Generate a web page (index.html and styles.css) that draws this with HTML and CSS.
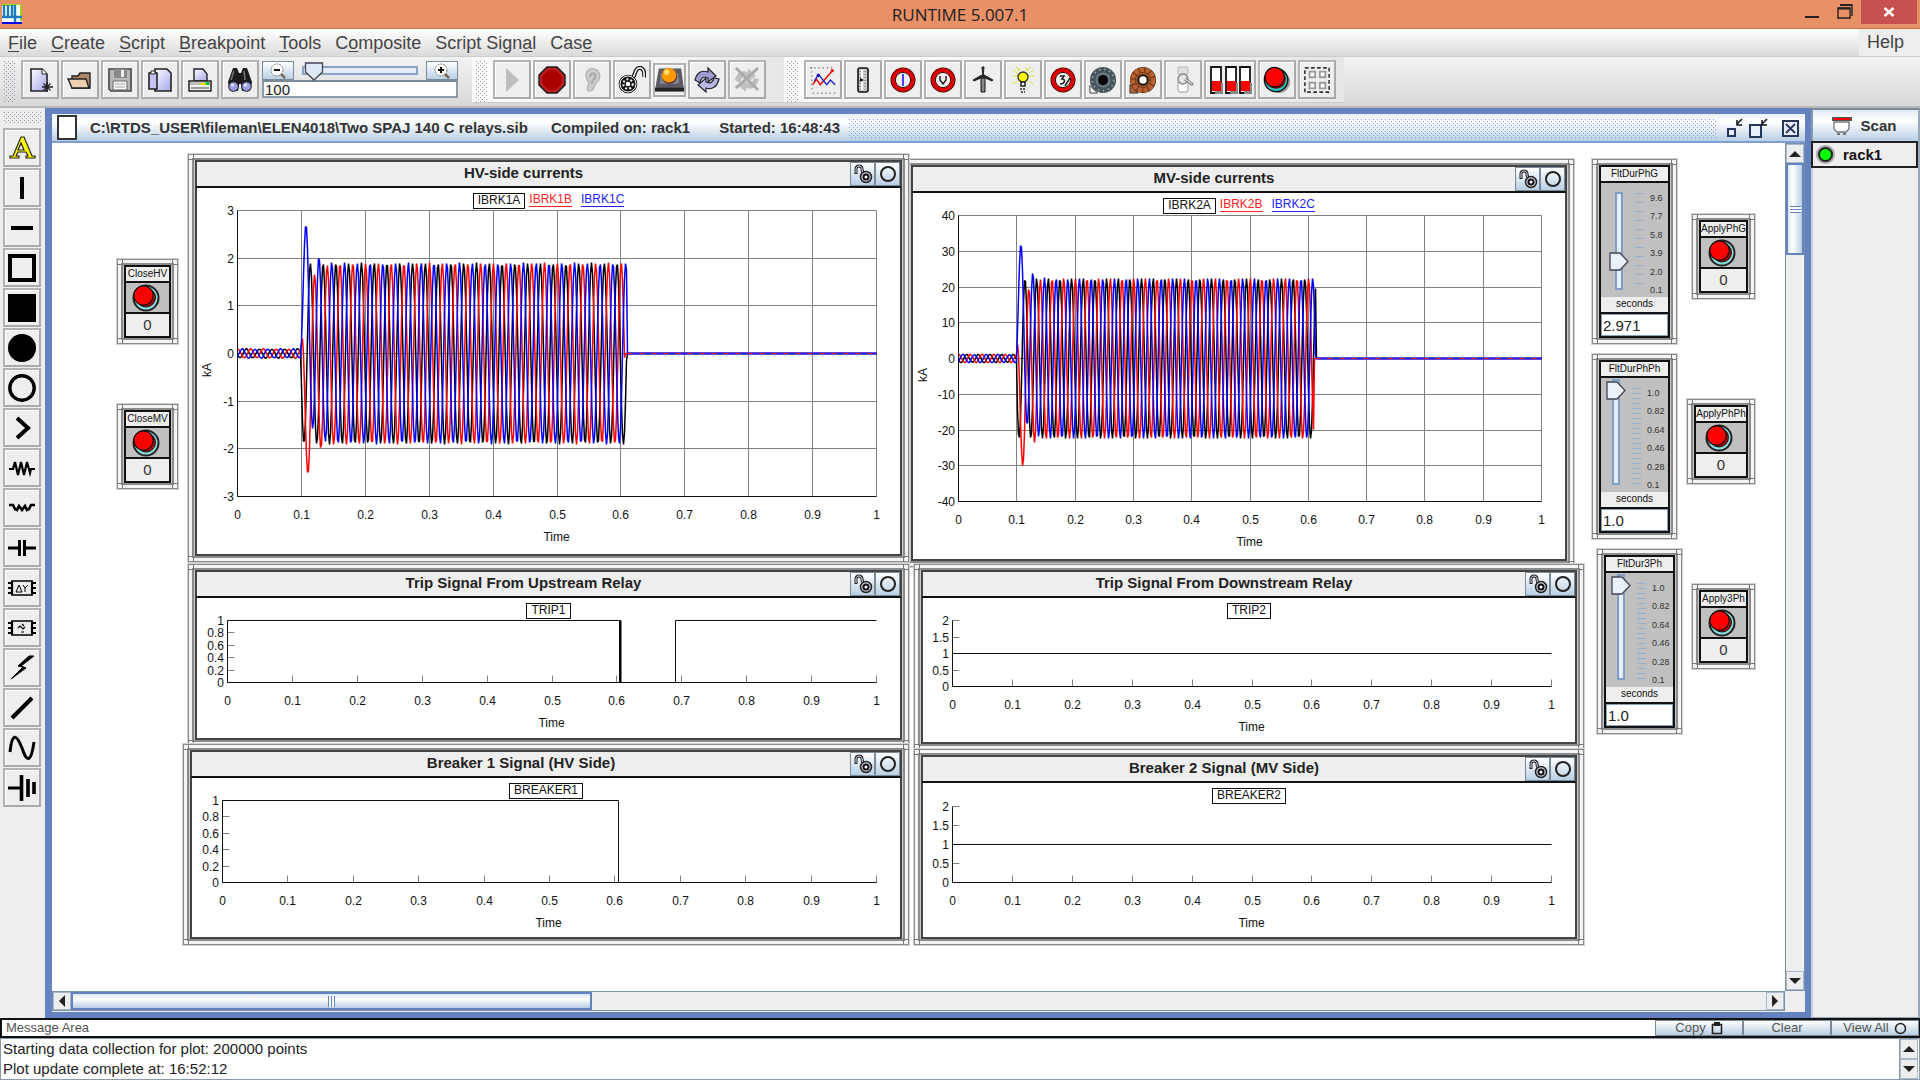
FILE: index.html
```html
<!DOCTYPE html>
<html lang="en">
<head>
<meta charset="utf-8">
<title>RUNTIME 5.007.1</title>
<link rel="stylesheet" href="styles.css">
</head>
<body>
<header class="titlebar">
  <svg class="app-icon" width="20" height="20" viewBox="0 0 20 20"><rect width="20" height="20" fill="#fff"/><path d="M0 0h14v2H0zM18 0h2v17h-2zM14 0h4v1h-4z" fill="#9fd020"/><path d="M2 1v11M6 1v11M10 1v11M13 1v17M0 13h20" stroke="#1c7cc0" stroke-width="2.4" fill="none"/><path d="M0 18h20v2H0z" fill="#00e"/></svg>
  <h1>RUNTIME 5.007.1</h1>
  <div class="win-controls">
    <button class="wc" aria-label="Minimize"><svg width="16" height="20" viewBox="0 0 16 20"><path d="M1 17h14" stroke="#222" stroke-width="2"/></svg></button>
    <button class="wc" aria-label="Restore"><svg width="16" height="20" viewBox="0 0 16 20"><path d="M3 5h12v11M1 8h12v10H1z" stroke="#222" stroke-width="1.4" fill="none"/><path d="M3 5h12M1 8.500h12" stroke="#222" stroke-width="2"/></svg></button>
    <button class="wc close" aria-label="Close"><svg width="12" height="10" viewBox="0 0 12 10"><path d="M1.500 1l9 8M10.500 1l-9 8" stroke="#fff" stroke-width="2.400"/></svg></button>
  </div>
</header>

<nav class="menubar">
  <a href="#"><u>F</u>ile</a><a href="#"><u>C</u>reate</a><a href="#"><u>S</u>cript</a><a href="#"><u>B</u>reakpoint</a><a href="#"><u>T</u>ools</a><a href="#">C<u>o</u>mposite</a><a href="#">Script Sign<u>a</u>l</a><a href="#">Cas<u>e</u></a>
  <a href="#" class="help">Help</a>
</nav>

<div class="toolbars">
  <div class="toolbar first">
    <i class="grip"></i>
    <button class="tb" aria-label="New"><svg viewBox="0 0 28 28"><defs><linearGradient id="lav" x2="1" y2="1"><stop stop-color="#fff"/><stop offset=".6" stop-color="#c8c8f4"/><stop offset="1" stop-color="#a8a8e0"/></linearGradient></defs><path d="M5 3h11l5 5v17H5z" fill="url(#lav)" stroke="#222" stroke-width="1.600"/><path d="M16 3v5h5" fill="#fff" stroke="#222"/><path d="M21 16v10M16 21h11M17.500 17.500l7 7M24.500 17.500l-7 7" stroke="#222" stroke-width="1.300"/></svg></button>
    <button class="tb" aria-label="Open"><svg viewBox="0 0 28 28"><path d="M6 22V10h6l2-3h10v15z" fill="#b08868" stroke="#222" stroke-width="1.400"/><path d="M2 13h18l3 9H6z" fill="#ecd0b0" stroke="#222" stroke-width="1.400"/></svg></button>
    <button class="tb" aria-label="Save"><svg viewBox="0 0 28 28"><path d="M3 3h22v22H5l-2-2z" fill="#b8b8b8" stroke="#444" stroke-width="1.600"/><path d="M8 3h13v9H8z" fill="#888"/><path d="M15 4h3v7h-3z" fill="#eee"/><path d="M7 15h14v9H7z" fill="#f4f4f4" stroke="#666"/><path d="M9 18h10M9 21h10" stroke="#aaa"/></svg></button>
    <button class="tb" aria-label="Paste"><svg viewBox="0 0 28 28"><path d="M9 3h12l4 4v18H9z" fill="url(#lav)" stroke="#222" stroke-width="1.600"/><path d="M3 7h8v16H3z" fill="#c4c4ee" stroke="#222" stroke-width="1.600"/><path d="M5 5h4v3H5z" fill="#fff" stroke="#222"/></svg></button>
    <button class="tb" aria-label="Print"><svg viewBox="0 0 28 28"><path d="M8 15V3h9l4 5v7z" fill="url(#lav)" stroke="#222" stroke-width="1.400"/><path d="M3 15h22v10H3z" fill="#eee" stroke="#222" stroke-width="1.500"/><path d="M4 16h20v3H4z" fill="#bcbcbc"/><path d="M14 17h9v2h-9z" fill="#dd0"/><path d="M20 16h3v3h-3z" fill="#0b3"/><path d="M5 22h18" stroke="#999" stroke-width="2"/></svg></button>
    <button class="tb" aria-label="Find"><svg viewBox="0 0 28 28"><path d="M7 2h4l2 5h2l2-5h4l5 14-2 9h-8l-1-7h-2l-1 7H4l-2-9z" fill="#1c1c1c"/><path d="M8 5L5 14M18 5l1 9" stroke="#777" stroke-width="1.500"/><circle cx="7.500" cy="20.500" r="4.800" fill="#9c9ce8" stroke="#111"/><circle cx="20.500" cy="20.500" r="4.800" fill="#9c9ce8" stroke="#111"/><circle cx="6.500" cy="19" r="1.600" fill="#e8e8ff"/><circle cx="19.500" cy="19" r="1.600" fill="#e8e8ff"/></svg></button>
    <div class="zoom">
      <div class="zoom-row">
        <button class="zb" aria-label="Zoom out"><svg width="20" height="16" viewBox="0 0 20 16"><circle cx="9" cy="7" r="6" fill="#fff" stroke="#777" stroke-dasharray="2 1"/><path d="M6 7h6" stroke="#111" stroke-width="2"/><path d="M13 11l4 4" stroke="#765" stroke-width="2.500"/></svg></button>
        <input class="hslider" type="range" min="0" max="100" value="0" aria-label="Zoom">
        <button class="zb" aria-label="Zoom in"><svg width="20" height="16" viewBox="0 0 20 16"><circle cx="9" cy="7" r="6" fill="#fff" stroke="#777" stroke-dasharray="2 1"/><path d="M6 7h6M9 4v6" stroke="#111" stroke-width="2"/><path d="M13 11l4 4" stroke="#765" stroke-width="2.500"/></svg></button>
      </div>
      <input class="zoom-value" type="text" value="100" aria-label="Zoom percent">
    </div>
  </div>

  <div class="toolbar second">
    <i class="grip"></i>
    <button class="tb" aria-label="Run"><svg viewBox="0 0 28 28"><path d="M8 2l13 12L8 26z" fill="#bdbdbd"/></svg></button>
    <button class="tb" aria-label="Stop"><svg viewBox="0 0 28 28"><path d="M9 1h10l8 8v10l-8 8H9l-8-8V9z" fill="#a00" stroke="#222" stroke-width="1.500"/><path d="M10 3h8l7 7v8l-7 7h-8l-7-7v-8z" fill="none" stroke="#c44"/></svg></button>
    <button class="tb" aria-label="Listen"><svg viewBox="0 0 28 28"><path d="M9 13c-3-7 2-11 7-10 7 1 7 10 3 13-3 2-2 9-7 9-4 0-3-4-1-7z" fill="#ccc" stroke="#b8b8b8" stroke-width="1.500"/><path d="M12 11c0-5 7-5 5 1-1 2-4 2-3 6" fill="none" stroke="#a8a8a8" stroke-width="2"/></svg></button>
    <button class="tb" aria-label="Unlock"><svg viewBox="0 0 28 28"><path d="M14 12c4-2 2-9 7-10 4-1 6 4 5 9" fill="none" stroke="#111" stroke-width="4"/><path d="M14 12c4-2 2-9 7-10 4-1 6 4 5 9" fill="none" stroke="#fff" stroke-width="1.600"/><circle cx="10" cy="18" r="9.300" fill="#111"/><circle cx="10" cy="18" r="8" fill="none" stroke="#fff"/><circle cx="10" cy="18" r="4.700" fill="none" stroke="#fff" stroke-width="2" stroke-dasharray="2 2"/><circle cx="10" cy="18" r="2.300" fill="#fff"/></svg></button>
    <button class="tb small" aria-label="Alarm"><svg viewBox="0 0 30 26"><path d="M4 1h23l3 22H0z" fill="#5a5a62"/><path d="M6 6h18l1 11H5z" fill="#85858d"/><path d="M0 21h30v4H0z" fill="#222"/><circle cx="15" cy="9" r="8" fill="#633"/><circle cx="14.500" cy="8" r="7.500" fill="#f90"/><circle cx="12" cy="5" r="2.800" fill="#fd6"/></svg></button>
    <button class="tb" aria-label="Refresh"><svg viewBox="0 0 28 28"><path d="M2 14C4 6 9 4 15 6V2l8 8-8 6v-4c-5-2-7 0-8 5z" fill="#9c9cd0" stroke="#223" stroke-width="1.200"/><path d="M26 13c-2 8-7 11-13 9v4l-8-7 8-7v4c5 2 7 0 8-4z" fill="#b8b8e0" stroke="#223" stroke-width="1.200"/></svg></button>
    <button class="tb" aria-label="Refresh off"><svg viewBox="0 0 28 28"><path d="M2 14C4 6 9 4 15 6V2l8 8-8 6v-4c-5-2-7 0-8 5zM26 13c-2 8-7 11-13 9v4l-8-7 8-7v4c5 2 7 0 8-4z" fill="#c0c0c0"/><path d="M3 2l22 22M25 2L3 22" stroke="#aaa" stroke-width="3"/></svg></button>
  </div>

  <div class="toolbar third">
    <i class="grip"></i>
    <button class="tb" aria-label="Plot"><svg viewBox="0 0 30 30"><path d="M3 1v26M1 2h27M4 29h24" stroke="#777" stroke-width="1.300" stroke-dasharray="1.500 3"/><path d="M4 20l4-6 4 6L25 5" fill="none" stroke="#e11" stroke-width="1.700"/><path d="M6 16l4-7 9 11 4-5 5 5" fill="none" stroke="#22c" stroke-width="1.500"/><circle cx="10" cy="10" r="1.800" fill="#00a"/><circle cx="25" cy="5" r="1.800" fill="#e11"/></svg></button>
    <button class="tb" aria-label="Slider"><svg viewBox="0 0 28 28"><rect x="9" y="2" width="10" height="24" rx="2" fill="#ccc" stroke="#111" stroke-width="1.600"/><path d="M11 5v19M16 5v19" stroke="#666" stroke-dasharray="1 2"/><path d="M13 4v20" stroke="#fff" stroke-width="2"/><path d="M11 12l4 2-4 2z" fill="#111"/></svg></button>
    <button class="tb" aria-label="Meter"><svg viewBox="0 0 28 28"><circle cx="14" cy="14" r="12.500" fill="#300"/><circle cx="14" cy="14" r="9.700" fill="#f1eeee" stroke="#d00" stroke-width="4"/><circle cx="14" cy="14" r="7.600" fill="none" stroke="#311"/><path d="M14 8v12" stroke="#44f" stroke-width="2"/></svg></button>
    <button class="tb" aria-label="Voltmeter"><svg viewBox="0 0 28 28"><circle cx="14" cy="14" r="12.500" fill="#300"/><circle cx="14" cy="14" r="9.700" fill="#f1eeee" stroke="#d00" stroke-width="4"/><circle cx="14" cy="14" r="7.600" fill="none" stroke="#311"/><path d="M11 10v4l3 4 3-4v-4" stroke="#222" stroke-width="1.500" fill="none"/></svg></button>
    <button class="tb" aria-label="Turbine"><svg viewBox="0 0 28 28"><path d="M12 12h4v14h-4z" fill="#888" stroke="#111"/><path d="M14 12L13 1h2zM14 11L5 15l-1-1 9-5zM14 11l9 4 1-1-9-5z" fill="#222" stroke="#222"/></svg></button>
    <button class="tb" aria-label="Lamp"><svg viewBox="0 0 28 28"><path d="M4 4l4 3M3 10h5M4 18l4-3M24 4l-4 3M25 10h-5M24 18l-4-3M10 2l1 3M18 2l-1 3M7 1l3 4M21 1l-3 4" stroke="#dd0" stroke-dasharray="2 1"/><circle cx="14" cy="11" r="5" fill="#ff0" stroke="#332" stroke-width="1.400"/><path d="M12 16h4v4h-4z" fill="#fff" stroke="#222" stroke-width="1.500"/><path d="M11 23h6M12 26h4" stroke="#222" stroke-width="1.500" stroke-dasharray="2 1"/></svg></button>
    <button class="tb" aria-label="Three-phase meter"><svg viewBox="0 0 28 28"><circle cx="14" cy="14" r="12.500" fill="#300"/><circle cx="14" cy="14" r="9.700" fill="#f1eeee" stroke="#d00" stroke-width="4"/><circle cx="14" cy="14" r="7.600" fill="none" stroke="#311"/><path d="M11 10h4l-2 3c4 0 3 5-2 5M16 20l5-8" stroke="#222" stroke-width="1.500" fill="none"/></svg></button>
    <button class="tb" aria-label="Dial"><svg viewBox="0 0 30 30"><path d="M1 21v8h8z" fill="#fff" stroke="#333"/><circle cx="15" cy="15" r="14" fill="#48545c"/><circle cx="15" cy="15" r="11.500" fill="none" stroke="#8aa" stroke-width="2" stroke-dasharray="1.500 4"/><circle cx="15" cy="15" r="8" fill="#6a7a84"/><circle cx="15" cy="15" r="5.500" fill="#08080a"/></svg></button>
    <button class="tb" aria-label="Selector"><svg viewBox="0 0 30 30"><path d="M1 20v9h9z" fill="#a63" stroke="#333"/><circle cx="15" cy="15" r="14" fill="#5a2c10"/><circle cx="15" cy="15" r="11" fill="none" stroke="#b86030" stroke-width="5" stroke-dasharray="5 1"/><circle cx="15" cy="15" r="8" fill="#a05028"/><circle cx="15" cy="15" r="5" fill="#fff" stroke="#111" stroke-width="2"/></svg></button>
    <button class="tb" aria-label="Switch"><svg viewBox="0 0 28 28"><path d="M9 1h10v7H9z" fill="#ddd" stroke="#bbb"/><rect x="9" y="15" width="10" height="11" rx="2" fill="#fff" stroke="#999"/><circle cx="14" cy="13" r="5" fill="#e4e4e4" stroke="#888" stroke-width="1.500"/><path d="M16 13l8 6" stroke="#888" stroke-width="3"/><path d="M16 13l7 5" stroke="#eee"/></svg></button>
    <button class="tb wide" aria-label="Switches"><svg viewBox="0 0 44 30"><g stroke="#111" stroke-width="1.800" fill="#fff"><path d="M3 2h10v26H3zM18 2h10v26H18zM32 2h10v26H32z"/></g><path d="M7 18h8v11H7zM22 18h8v11h-8zM36 18h8v11h-8z" fill="#888"/><path d="M4 16h9v10H4zM19 16h9v10h-9zM33 16h9v10h-9z" fill="#f00"/></svg></button>
    <button class="tb" aria-label="Push button"><svg viewBox="0 0 30 30"><circle cx="17" cy="17" r="12" fill="#999"/><circle cx="14" cy="15" r="12.500" fill="#2cc" stroke="#111" stroke-width="1.500"/><circle cx="14" cy="14" r="10.500" fill="#800"/><circle cx="12.500" cy="12" r="10.500" fill="#f00" stroke="#111" stroke-width="1.500"/></svg></button>
    <button class="tb" aria-label="Group"><svg viewBox="0 0 30 30"><path d="M2 2h26v26H2z" fill="none" stroke="#333" stroke-width="1.700" stroke-dasharray="4 2.500"/><path d="M7 6h6v6H7zM18 6h6v6h-6zM7 18h6v6H7zM18 18h6v6h-6z" fill="#fff" stroke="#999" stroke-width="2"/></svg></button>
  </div>
</div>

<main>
  <aside class="palette">
    <i class="grip"></i>
    <button class="tb" aria-label="Text"><svg viewBox="0 0 28 28"><path fill-rule="evenodd" d="M13 3h3l8 19h3v2h-9v-2h2l-2-4h-8l-2 4h3v2H2v-2h3zM13 9l-3 7h6z" fill="#ff0" stroke="#222" stroke-width="1.200"/></svg></button>
    <button class="tb" aria-label="Vertical line"><svg viewBox="0 0 28 28"><path d="M14 3v22" stroke="#000" stroke-width="4"/></svg></button>
    <button class="tb" aria-label="Horizontal line"><svg viewBox="0 0 28 28"><path d="M3 14h22" stroke="#000" stroke-width="4"/></svg></button>
    <button class="tb" aria-label="Rectangle"><svg viewBox="0 0 28 28"><path d="M2 2h24v24H2z" fill="none" stroke="#000" stroke-width="4"/></svg></button>
    <button class="tb" aria-label="Filled rectangle"><svg viewBox="0 0 28 28"><path d="M0 0h28v28H0z"/></svg></button>
    <button class="tb" aria-label="Filled circle"><svg viewBox="0 0 28 28"><circle cx="14" cy="14" r="14"/></svg></button>
    <button class="tb" aria-label="Circle"><svg viewBox="0 0 28 28"><circle cx="14" cy="14" r="12.200" fill="none" stroke="#000" stroke-width="3.400"/></svg></button>
    <button class="tb" aria-label="Arrow"><svg viewBox="0 0 28 28"><path d="M9 4l11 10L9 24" fill="none" stroke="#000" stroke-width="4"/></svg></button>
    <button class="tb" aria-label="Resistor"><svg viewBox="0 0 28 28"><path d="M1 15h4l2-7 3 13 3-13 3 13 3-13 3 11 1-4h4" fill="none" stroke="#000" stroke-width="2.200"/></svg></button>
    <button class="tb" aria-label="Inductor"><svg viewBox="0 0 28 28"><path d="M1 11h4l2 4 2 1 2-4 3 4 3-4 2 4 2-1 2-4h4" fill="none" stroke="#000" stroke-width="2.600"/></svg></button>
    <button class="tb" aria-label="Capacitor"><svg viewBox="0 0 28 28"><path d="M0 14h11M17 14h11M11.500 6v16M16.500 6v16" stroke="#000" stroke-width="3"/></svg></button>
    <button class="tb" aria-label="Transformer"><svg viewBox="0 0 28 28"><path d="M4 7h20v14H4z" fill="none" stroke="#000" stroke-width="1.700"/><path d="M4 7v14M24 7v14M0 9h4M0 14h4M0 19h4M24 9h4M24 14h4M24 19h4" stroke="#000" stroke-width="2.200"/><path d="M8 18l3-7 3 7zM15 11l2 3v4M20 11l-3 3" fill="none" stroke="#000"/></svg></button>
    <button class="tb" aria-label="Machine"><svg viewBox="0 0 28 28"><path d="M4 7h20v14H4z" fill="none" stroke="#000" stroke-width="1.700"/><path d="M4 7v14M24 7v14M0 9h4M0 14h4M0 19h4M24 9h4M24 14h4M24 19h4" stroke="#000" stroke-width="2.200"/><path d="M10 14l2-2 3 3 2-2M14 10l2 2M13 18h3" fill="none" stroke="#000" stroke-width="1.200"/></svg></button>
    <button class="tb" aria-label="Fault"><svg viewBox="0 0 28 28"><path d="M26 2h-5L10 12l5 1L3 25l15-11-5-2z" stroke="#000"/></svg></button>
    <button class="tb" aria-label="Diagonal line"><svg viewBox="0 0 28 28"><path d="M4 24L24 4" stroke="#000" stroke-width="4"/></svg></button>
    <button class="tb" aria-label="Sine source"><svg viewBox="0 0 28 28"><path d="M2 18C4-1 8-1 14 14c5 15 9 15 12-6" fill="none" stroke="#000" stroke-width="3"/></svg></button>
    <button class="tb" aria-label="Ground"><svg viewBox="0 0 28 28"><path d="M0 14h12" stroke="#000" stroke-width="3"/><path d="M13.500 1v26M20 5v18M26 8v12" stroke="#000" stroke-width="3.600"/></svg></button>
  </aside>

  <section class="frame">
    <div class="frame-title">
      <i class="doc"></i>
      <h2><span>C:\RTDS_USER\fileman\ELEN4018\Two SPAJ 140 C relays.sib</span><span>Compiled on: rack1</span><span>Started: 16:48:43</span></h2>
      <i class="dots"></i>
      <button class="fb" aria-label="Iconify"><svg width="20" height="20" viewBox="0 0 20 20"><path d="M3 11h7v7H3z" fill="#e8eefa" stroke="#26355c" stroke-width="2"/><path d="M17 1l-5 5M12 2v5h5" stroke="#111" stroke-width="1.500" fill="none"/></svg></button>
      <button class="fb" aria-label="Maximize"><svg width="20" height="20" viewBox="0 0 20 20"><path d="M2 7h11v12H2z" fill="#e8eefa" stroke="#26355c" stroke-width="2"/><path d="M19 1l-5 5M14 2v5h5" stroke="#111" stroke-width="1.500" fill="none"/></svg></button>
      <button class="fb last" aria-label="Close frame"><svg width="20" height="20" viewBox="0 0 20 20"><path d="M2 3h15v15H2z" fill="#e8eefa" stroke="#26355c" stroke-width="2"/><path d="M5 6l9 9M14 6l-9 9" stroke="#26355c" stroke-width="1.800"/></svg></button>
    </div>
    <div class="frame-body">
      <div class="canvas">
        <section class="win plot p-mv"><header><h3>MV-side currents</h3><button class="hb lock" aria-label="Lock"></button><button class="hb ring" aria-label="Zoom plot"></button></header>
          <div class="body"><div class="chart" data-chart="mv"></div><div class="legend"><b>IBRK2A</b><span class="red">IBRK2B</span><span class="blue">IBRK2C</span></div></div></section>
        <section class="win plot p-hv"><header><h3>HV-side currents</h3><button class="hb lock" aria-label="Lock"></button><button class="hb ring" aria-label="Zoom plot"></button></header>
          <div class="body"><div class="chart" data-chart="hv"></div><div class="legend"><b>IBRK1A</b><span class="red">IBRK1B</span><span class="blue">IBRK1C</span></div></div></section>
        <section class="win plot p-trip1"><header><h3>Trip Signal From Upstream Relay</h3><button class="hb lock" aria-label="Lock"></button><button class="hb ring" aria-label="Zoom plot"></button></header>
          <div class="body"><div class="chart" data-chart="trip1"></div><div class="legend"><b>TRIP1</b></div></div></section>
        <section class="win plot p-trip2"><header><h3>Trip Signal From Downstream Relay</h3><button class="hb lock" aria-label="Lock"></button><button class="hb ring" aria-label="Zoom plot"></button></header>
          <div class="body"><div class="chart" data-chart="trip2"></div><div class="legend"><b>TRIP2</b></div></div></section>
        <section class="win plot p-brk1"><header><h3>Breaker 1 Signal (HV Side)</h3><button class="hb lock" aria-label="Lock"></button><button class="hb ring" aria-label="Zoom plot"></button></header>
          <div class="body"><div class="chart" data-chart="brk1"></div><div class="legend"><b>BREAKER1</b></div></div></section>
        <section class="win plot p-brk2"><header><h3>Breaker 2 Signal (MV Side)</h3><button class="hb lock" aria-label="Lock"></button><button class="hb ring" aria-label="Zoom plot"></button></header>
          <div class="body"><div class="chart" data-chart="brk2"></div><div class="legend"><b>BREAKER2</b></div></div></section>

        <section class="win push b-closehv"><h4>CloseHV</h4><button class="round" aria-label="CloseHV"></button><output>0</output></section>
        <section class="win push b-closemv"><h4>CloseMV</h4><button class="round" aria-label="CloseMV"></button><output>0</output></section>
        <section class="win push b-phg"><h4>ApplyPhG</h4><button class="round" aria-label="ApplyPhG"></button><output>0</output></section>
        <section class="win push b-phph"><h4>ApplyPhPh</h4><button class="round" aria-label="ApplyPhPh"></button><output>0</output></section>
        <section class="win push b-3ph"><h4>Apply3Ph</h4><button class="round" aria-label="Apply3Ph"></button><output>0</output></section>

        <section class="win level s-phg"><h4><label for="phg">FltDurPhG</label></h4>
          <div class="scale"><input id="phg" class="vslider" type="range" min="0.1" max="9.6" step="0.001" value="2.3"><i class="ticks coarse"></i><ol><li>9.6</li><li>7.7</li><li>5.8</li><li>3.9</li><li>2.0</li><li>0.1</li></ol></div>
          <p>seconds</p><input class="num" type="text" value="2.971" aria-label="FltDurPhG seconds"></section>
        <section class="win level s-phph"><h4><label for="phph">FltDurPhPh</label></h4>
          <div class="scale full"><input id="phph" class="vslider" type="range" min="0.1" max="1" step="0.01" value="1"><i class="ticks"></i><ol><li>1.0</li><li>0.82</li><li>0.64</li><li>0.46</li><li>0.28</li><li>0.1</li></ol></div>
          <p>seconds</p><input class="num" type="text" value="1.0" aria-label="FltDurPhPh seconds"></section>
        <section class="win level s-3ph"><h4><label for="ph3">FltDur3Ph</label></h4>
          <div class="scale full"><input id="ph3" class="vslider" type="range" min="0.1" max="1" step="0.01" value="1"><i class="ticks"></i><ol><li>1.0</li><li>0.82</li><li>0.64</li><li>0.46</li><li>0.28</li><li>0.1</li></ol></div>
          <p>seconds</p><input class="num" type="text" value="1.0" aria-label="FltDur3Ph seconds"></section>
      </div>
      <div class="vbar"><button class="arrow up" aria-label="Scroll up"></button><i class="thumb"></i><i class="track"></i><button class="arrow down" aria-label="Scroll down"></button></div>
      <div class="hbar"><button class="arrow left" aria-label="Scroll left"></button><i class="thumb"></i><i class="track"></i><button class="arrow right" aria-label="Scroll right"></button></div>
    </div>
  </section>

  <aside class="racks">
    <button class="scan"><svg width="22" height="20" viewBox="0 0 22 20"><path d="M1 1h20v4H1z" fill="#555"/><path d="M3 3h16" stroke="#f00" stroke-width="2"/><path d="M3 6h15v7l-3 3H6l-3-3z" fill="#fff" stroke="#777" stroke-width="1.300"/><path d="M6 18h3M12 18h3" stroke="#777" stroke-width="2"/></svg>Scan</button>
    <div class="rack"><i class="led"></i>rack1</div>
    <div class="rest"></div>
  </aside>
</main>

<footer class="messages">
  <div class="msg-head"><h5>Message Area</h5>
    <button>Copy <svg width="12" height="13" viewBox="0 0 12 13"><path d="M1.500 2.500h9v9h-9z" fill="none" stroke="#222" stroke-width="1.600"/><path d="M3 0h6v4H3z" fill="#222"/></svg></button>
    <button>Clear</button>
    <button>View All <svg width="13" height="13" viewBox="0 0 13 13"><circle cx="6.500" cy="6.500" r="5" fill="none" stroke="#222" stroke-width="1.500"/></svg></button></div>
  <div class="msg-body"><div class="lines"><p>Starting data collection for plot: 200000 points</p><p>Plot update complete at: 16:52:12</p></div>
    <div class="mbar"><button class="arrow up" aria-label="Messages up"></button><button class="arrow down" aria-label="Messages down"></button></div></div>
</footer>
<script src="charts.js"></script>
</body>
</html>
```
FILE: styles.css
```css
* { box-sizing: border-box; }
body { margin: 0; height: 100vh; display: flex; flex-direction: column; background: #eee; font-family: "Liberation Sans", Arial, sans-serif; font-size: 15px; color: #333; overflow: hidden; }
h1, h2, h3, h4, h5, p, ol { margin: 0; padding: 0; font-size: inherit; font-weight: inherit; }
ol { list-style: none; }
button { font: inherit; color: inherit; padding: 0; margin: 0; border: 0; background: none; display: flex; align-items: center; justify-content: center; }
input { font: inherit; margin: 0; min-width: 0; }
i { display: block; }
svg { display: block; }

.titlebar { flex: none; height: 29px; display: grid; grid-template-columns: 1fr auto 1fr; background: #e99067; border-bottom: 1px solid #cf7648; }
.titlebar h1 { font: 17px/30px "Open Sans", "Noto Sans", sans-serif; color: #222; }
.app-icon { margin: 4px 0 0 2px; }
.win-controls { display: flex; justify-content: flex-end; align-items: flex-start; padding-right: 3px; }
.wc { width: 33px; height: 24px; align-items: flex-start; }
.wc.close { width: 56px; align-items: center; background: #c75050; }

.menubar { flex: none; height: 28px; display: flex; gap: 14px; padding-left: 8px; align-items: center; background: linear-gradient(#fff, #dadada); border-bottom: 1px solid #ccc; font-size: 18px; line-height: 20px; }
.menubar a { color: #444; text-decoration: none; }
.menubar u { text-underline-offset: 2px; }
.menubar .help { margin-left: auto; align-self: stretch; width: 61px; padding-left: 8px; line-height: 26px; background: #eee; }

.toolbars { flex: none; height: 51px; display: flex; align-items: flex-start; background: linear-gradient(#f2f2f2, #d8d8d8); border-bottom: 2px solid #b8b8b8; }
.toolbar { display: flex; height: 46px; gap: 2px; padding-top: 3px; border-bottom: 1px solid #ccc; background: linear-gradient(90deg, #fbfbfb, #f6f6f6 60%, #e6e6e6); }
.first { width: 472px; padding-left: 3px; background: none; border: 0; }
.second { width: 312px; padding-left: 3px; }
.third { padding: 3px 8px 0 2px; }
.grip, .dots { background-image: conic-gradient(from 90deg at 3px 3px, #8b96a8 25%, #0000 0), conic-gradient(from 90deg at 3px 3px, #8b96a8 25%, #0000 0); background-size: 4px 4px; background-position: 0 0, 2px 2px; }
.toolbar .grip { width: 12px; height: 42px; margin-right: 4px; }
.tb { flex: none; width: 38px; height: 39px; border: 2px solid #b4b4b4; border-right-color: #aaa; border-bottom-color: #aaa; background: #eee; box-shadow: inset 1px 1px #fff; }
.tb svg { width: 28px; height: 28px; }
.tb.small { width: 33px; height: 34px; margin-top: 3px; }
.tb.small svg { width: 30px; height: 26px; }
.tb.wide { width: 52px; }
.tb.wide svg { width: 44px; height: 30px; }
.zoom { width: 196px; margin: 1px 0 0 1px; }
.zoom-row { display: flex; justify-content: space-between; height: 19px; }
.zb { width: 32px; height: 19px; border: 1px solid #7a8a99; background: linear-gradient(#fff, #b8cfe5); }
.zoom-value { display: block; width: 100%; height: 18px; border: 2px solid #8a9cb0; border-top-color: #7a8a99; background: #fff; color: #222; padding: 0 1px; }
.hslider { appearance: none; -webkit-appearance: none; width: 116px; height: 19px; background: none; }
.hslider::-webkit-slider-runnable-track { height: 9px; border: 2px solid #8ba3c2; background: #e4ecf5; }
.hslider::-webkit-slider-thumb { -webkit-appearance: none; width: 20px; height: 19px; margin-top: -6px; background: url("data:image/svg+xml,%3Csvg xmlns='http://www.w3.org/2000/svg' width='20' height='19'%3E%3Cpath d='M1.500 1h17v9l-8.500 8L1.500 10z' fill='%23dfe9f5' stroke='%23445' stroke-width='1.300'/%3E%3C/svg%3E"); }

main { flex: 1; min-height: 0; display: flex; }
.palette { width: 45px; padding: 3px 0 0 3px; display: flex; flex-direction: column; gap: 1px; }
.palette .grip { width: 39px; height: 12px; margin-bottom: 4px; }

.frame { flex: 1; min-width: 0; display: flex; flex-direction: column; border: 6px solid #6382bf; border-left-width: 7px; background: #eee; }
.frame-title { height: 29px; flex: none; display: flex; align-items: center; padding: 0 4px 0 5px; background: linear-gradient(#e8f0f8, #fff 30%, #b8cfe5); border-bottom: 2px solid #7f9fd4; }
.doc { width: 20px; height: 25px; border: 2px solid #333; background: #fff; }
.frame-title h2 { display: flex; margin-left: 13px; font-weight: bold; white-space: pre; }
.frame-title span:nth-child(2) { margin: 0 29px 0 23px; }
.dots { flex: 1; height: 20px; margin: 0 8px; background-image: conic-gradient(from 90deg at 3px 3px, #7f9fd4 25%, #0000 0), conic-gradient(from 90deg at 3px 3px, #7f9fd4 25%, #0000 0); }
.fb { width: 20px; height: 22px; margin-right: 3px; }
.fb.last { margin: 0 0 0 10px; }
.frame-body { flex: 1; min-height: 0; display: grid; grid-template: 1fr 20px / 1fr 20px; padding-bottom: 1px; }
.canvas { position: relative; background: #fff; overflow: hidden; }

.vbar, .hbar { display: flex; background: #eee; border: 1px solid #7a8fa8; }
.vbar { flex-direction: column; }
.arrow { flex: none; width: 18px; height: 19px; background: #eee; border: 1px solid #a8b8c8; }
.arrow::before { content: ""; border: 6px solid transparent; }
.up::before { border-width: 0 6px 6px; border-bottom-color: #222; }
.down::before { border-width: 6px 6px 0; border-top-color: #222; }
.left::before { border-width: 6px 6px 6px 0; border-right-color: #222; }
.right::before { border-width: 6px 0 6px 6px; border-left-color: #222; }
.hbar .arrow { height: 18px; }
.track { flex: 1; }
.thumb { border: 2px solid #6382bf; display: flex; align-items: center; justify-content: center; }
.thumb::after { content: ""; width: 11px; height: 7px; }
.vbar .thumb { height: 92px; background: linear-gradient(90deg, #dce8f4, #fff 35%, #b8cfe5); }
.vbar .thumb::after { background: repeating-linear-gradient(#6382bf 0 1px, #fff 1px 3px); }
.hbar .thumb { width: 521px; background: linear-gradient(#dce8f4, #fff 35%, #b8cfe5); }
.hbar .thumb::after { width: 7px; height: 11px; background: repeating-linear-gradient(90deg, #6382bf 0 1px, #fff 1px 3px); }

.win { position: absolute; padding: 7px 8px; display: flex; flex-direction: column; background: #fff; box-shadow: inset 0 0 0 1px #d0d0d0, inset 0 0 0 2px #8c8c8c, inset 0 0 0 5px #f4f4f4, inset 0 0 0 7px #8c8c8c, inset 0 0 0 8px #c8c8c8; }
.win::before { content: ""; position: absolute; inset: 1px; pointer-events: none; background: linear-gradient(#777, #777) 5px 0 / 1px 6px, linear-gradient(#777, #777) 0 5px / 6px 1px, linear-gradient(#777, #777) calc(100% - 5px) 0 / 1px 6px, linear-gradient(#777, #777) 100% 5px / 6px 1px, linear-gradient(#777, #777) 5px 100% / 1px 6px, linear-gradient(#777, #777) 0 calc(100% - 5px) / 6px 1px, linear-gradient(#777, #777) calc(100% - 5px) 100% / 1px 6px, linear-gradient(#777, #777) 100% calc(100% - 5px) / 6px 1px; background-repeat: no-repeat; }
.plot header { display: flex; height: 28px; flex: none; background: #eee; border: 2px solid #111; border-color: #444 #444 #111; }
.plot h3 { flex: 1; text-align: center; font-weight: bold; line-height: 21px; color: #222; }
.hb { width: 25px; height: 24px; background: linear-gradient(#fff, #b8cfe5); border: 1px solid #7a8a99; }
.ring::before { content: ""; width: 12px; height: 12px; border: 2px solid #222; border-radius: 50%; }
.body { position: relative; flex: 1; background: #fff; border: 2px solid #444; border-top: 0; }
.chart { position: absolute; inset: 0; }
.chart svg { width: 100%; height: 100%; }
.chart text { font: 12px "Liberation Sans", Arial, sans-serif; fill: #111; }
.legend { position: relative; display: flex; justify-content: center; margin-top: 5px; font-size: 12px; line-height: 12px; }
.legend b { height: 16px; padding: 0 4px; border: 1px solid #111; background: #fff; color: #111; font-weight: normal; }
.legend span { height: 14px; margin-left: 4px; border-bottom: 1px solid; }
.legend .blue { margin-left: 9px; color: #22f; }
.legend .red { color: #f22; }

.p-hv { left: 135px; top: 10px; width: 723px; height: 410px; }
.p-mv { left: 851px; top: 15px; width: 672px; height: 410px; }
.p-trip1 { left: 135px; top: 420px; width: 723px; height: 184px; }
.p-trip2 { left: 861px; top: 420px; width: 672px; height: 188px; }
.p-brk1 { left: 130px; top: 600px; width: 728px; height: 203px; }
.p-brk2 { left: 861px; top: 605px; width: 672px; height: 198px; }

.win h4 { height: 18px; flex: none; border: 2px solid #111; background: #eee; font-size: 10px; line-height: 14px; text-align: center; color: #111; white-space: nowrap; overflow: hidden; }
.push { width: 65px; height: 87px; }
.round { height: 31px; width: 100%; padding-right: 4px; background: #c0c0c0; border: solid #111; border-width: 0 2px; }
.round svg { width: 28px; height: 28px; }
.push output { flex: 1; border: 2px solid #111; background: #eee; text-align: center; line-height: 22px; color: #333; }
.b-closehv { left: 64px; top: 115px; width: 63px; }
.b-closemv { left: 64px; top: 260px; width: 63px; }
.b-phg { left: 1639px; top: 70px; }
.b-phph { left: 1634px; top: 255px; width: 70px; }
.b-3ph { left: 1639px; top: 440px; }

.level { width: 87px; height: 187px; }
.s-phg { left: 1539px; top: 15px; }
.s-phph { left: 1539px; top: 210px; }
.s-3ph { left: 1544px; top: 405px; }
.scale { height: 114px; display: flex; align-items: flex-start; background: #c0c0c0; border: solid #111; border-width: 0 2px; padding: 9px 0 0 7px; }
.scale.full { padding-left: 4px; }
.vslider { flex: none; appearance: none; -webkit-appearance: none; writing-mode: vertical-lr; direction: rtl; width: 21px; height: 98px; background: none; }
.full .vslider { height: 106px; margin-top: -8px; }
.vslider::-webkit-slider-runnable-track { width: 8px; border: 2px solid #7f9fc8; background: #e4ecf5; }
.vslider::-webkit-slider-thumb { -webkit-appearance: none; width: 20px; height: 19px; margin-left: -8px; background: url("data:image/svg+xml,%3Csvg xmlns='http://www.w3.org/2000/svg' width='20' height='19'%3E%3Cpath d='M1 1h10l8 8.500-8 8.500H1z' fill='%23eaf1f9' stroke='%23445' stroke-width='1.300'/%3E%3C/svg%3E"); }
.ticks { flex: none; width: 9px; height: 96px; margin: 1px 0 0 6px; background: repeating-linear-gradient(#94b0cc 0 1px, #0000 1px 5px); }
.ticks.coarse { background: repeating-linear-gradient(#94b0cc 0 1px, #0000 1px 9px); }
.scale ol { margin: 0 0 0 6px; font-size: 9px; line-height: 12px; height: 104px; display: flex; flex-direction: column; justify-content: space-between; }
.level p { height: 15px; background: #eee; border: solid #111; border-width: 0 2px; text-align: center; font-size: 10px; line-height: 14px; color: #111; }
.num { flex: 1; width: 100%; border: 2px solid #111; background: #fff; padding: 0 2px; color: #222; box-shadow: inset 0 0 0 1px #8ba0b4; }

.racks { width: 109px; display: flex; flex-direction: column; border-right: 2px solid #9ab; border-top: 2px solid #7a8a99; }
.scan { height: 31px; flex: none; gap: 8px; padding-right: 4px; font-weight: bold; background: linear-gradient(#e0eaf4, #fff 35%, #b8cfe5); border-left: 2px solid #8a9aac; }
.rack { height: 27px; flex: none; display: flex; align-items: center; gap: 10px; padding-left: 5px; border: 2px solid #222; font-weight: bold; color: #111; }
.led { width: 15px; height: 15px; border: 2px solid #222; border-radius: 50%; background: #0f0; box-shadow: 0 0 0 2px #aaa; }
.rest { flex: 1; border-left: 2px solid #c8d0d8; border-bottom: 1px solid #9ab; }

.messages { flex: none; height: 62px; display: flex; flex-direction: column; background: #fff; }
.msg-head { height: 20px; flex: none; display: flex; border: 2px solid #111; border-right-width: 1px; font-size: 13px; color: #555; }
.msg-head h5 { flex: 1; padding-left: 4px; line-height: 16px; }
.msg-head button { width: 88px; gap: 5px; line-height: 16px; border: 1px solid #7a8a99; background: linear-gradient(#fff, #b8cfe5); }
.msg-body { flex: 1; display: flex; border: 1px solid #8a9aac; border-bottom-width: 2px; }
.lines { flex: 1; padding-left: 2px; line-height: 20px; color: #222; }
.mbar { width: 20px; padding-right: 1px; border-left: 1px solid #8a9aac; }
.mbar .arrow { width: 18px; height: 20px; }
```
FILE: charts.js
```javascript
const NS = "http://www.w3.org/2000/svg";
const TAU = 2 * Math.PI, PERIOD = 0.02;

// Plot areas in pixels of the window body; y limits, y step and label decimals.
const charts = {
  hv:    { l: 40, t: 22, r: 679, b: 308, min: -3, max: 3, step: 1, grid: true, unit: "kA", amp: 1.9, end: 0.61 },
  mv:    { l: 45, t: 22, r: 628, b: 308, min: -40, max: 40, step: 10, grid: true, unit: "kA", amp: 22.5, end: 0.613 },
  trip1: { l: 30, t: 22, r: 679, b: 84, min: 0, max: 1, step: 0.2, steps: [[0, 1], [0.604, 1], [0.604, 0], [0.606, 0], [0.606, 1], [0.606, 0], [0.69, 0], [0.69, 1], [1, 1]], pulse: 0.605 },
  trip2: { l: 29, t: 22, r: 628, b: 88, min: 0, max: 2, step: 0.5, steps: [[0, 1], [1, 1]] },
  brk1:  { l: 30, t: 22, r: 684, b: 104, min: 0, max: 1, step: 0.2, steps: [[0, 1], [0.605, 1], [0.605, 0], [1, 0]] },
  brk2:  { l: 29, t: 23, r: 628, b: 99, min: 0, max: 2, step: 0.5, steps: [[0, 1], [1, 1]] }
};

function add(parent, tag, attrs, text) {
  const el = document.createElementNS(NS, tag);
  for (const k in attrs) el.setAttribute(k, attrs[k]);
  if (text !== undefined) el.textContent = text;
  parent.appendChild(el);
  return el;
}

// Fault current of one phase: steady sine plus a decaying offset.
function current(phase, t, amp, end) {
  const peak = [0.114, 0.1205, 0.1075][phase];
  const wave = Math.cos(TAU * (t - peak) / PERIOD);
  if (t < 0.1) return 0.05 * amp * wave;
  if (t > end - (phase === 1 ? 0.003 : 0)) return 0;
  const offset = [0, -0.33 * Math.exp(-(t - 0.1105) / 0.0105), 0.42 * Math.exp(-(t - 0.1075) / 0.011)][phase];
  return amp * (wave + offset);
}

for (const host of document.querySelectorAll("[data-chart]")) {
  const c = charts[host.dataset.chart];
  const svg = add(host, "svg", {});
  const X = t => Math.round(c.l + t * (c.r - c.l)) + 0.5;
  const Y = v => Math.round(c.b - (v - c.min) / (c.max - c.min) * (c.b - c.t)) + 0.5;
  const line = (x1, y1, x2, y2, stroke) => add(svg, "path", { d: `M${x1} ${y1}L${x2} ${y2}`, stroke, fill: "none" });

  for (let i = 0; i <= 10; i++) {
    line(X(i / 10), Y(c.min), X(i / 10), c.grid ? Y(c.max) : Y(c.min) - 7, "#808080");
    add(svg, "text", { x: X(i / 10), y: c.b + 23, "text-anchor": "middle" }, String(i / 10));
  }
  const n = Math.round((c.max - c.min) / c.step);
  for (let i = 0; i <= n; i++) {
    const v = Math.round((c.min + i * c.step) * 10) / 10;
    line(X(0), Y(v), c.grid ? X(1) : X(0) + 7, Y(v), "#808080");
    add(svg, "text", { x: c.l - 3, y: Y(v) + 4, "text-anchor": "end" }, String(v));
  }
  line(X(0), Y(c.max), X(0), Y(c.min), "#111");
  line(X(0), Y(c.min), X(1), Y(c.min), "#111");
  add(svg, "text", { x: X(0.5) - 1, y: c.b + 45, "text-anchor": "middle" }, "Time");

  if (c.unit) {
    add(svg, "text", { transform: "translate(14 182) rotate(-90)", "text-anchor": "middle" }, c.unit);
    ["#000", "#f00", "#00f"].forEach((stroke, phase) => {
      let d = "";
      for (let px = c.l; px <= c.r; px++) {
        const t = (px - c.l) / (c.r - c.l);
        d += (d ? "L" : "M") + (px + 0.5) + " " + Y(current(phase, t, c.amp, c.end));
      }
      add(svg, "path", { d, stroke, fill: "none", "stroke-width": 1.5, "stroke-linejoin": "bevel" });
    });
    add(svg, "path", { d: `M${X(c.end)} ${Y(0)}H${X(1)}`, stroke: "#22f", "stroke-width": 2 });
    add(svg, "path", { d: `M${X(c.end)} ${Y(0)}H${X(1)}`, stroke: "#e22", "stroke-dasharray": "5 7" });
  } else {
    add(svg, "path", { d: "M" + c.steps.map(p => X(p[0]) + " " + Y(p[1])).join("L"), stroke: "#111", fill: "none" });
    if (c.pulse) add(svg, "path", { d: `M${X(c.pulse)} ${Y(1)}V${Y(0)}`, stroke: "#000", "stroke-width": 2 });
  }
}

// Shared glyphs of the plot headers and push buttons.
for (const b of document.querySelectorAll(".lock"))
  b.innerHTML = '<svg width="20" height="20" viewBox="0 0 20 20"><path d="M3 10V5c0-4 6-4 6 0 0 3 1 4 3 5" fill="none" stroke="#222" stroke-width="3"/><path d="M3 9V5c0-4 6-4 6 0 0 3 1 4 3 5" fill="none" stroke="#dde"/><circle cx="13" cy="13" r="5.500" fill="#ccd" stroke="#222" stroke-width="1.500"/><circle cx="13" cy="13" r="2.500" fill="#fff" stroke="#111" stroke-width="2"/></svg>';
for (const b of document.querySelectorAll(".round"))
  b.innerHTML = '<svg viewBox="0 0 28 28"><circle cx="14" cy="14" r="12.500" fill="#8dd" stroke="#222" stroke-width="2"/><circle cx="14" cy="13.500" r="9.500" fill="#a00" stroke="#111"/><circle cx="11.500" cy="11.500" r="9.700" fill="#f00" stroke="#111" stroke-width="1.300"/></svg>';
```
